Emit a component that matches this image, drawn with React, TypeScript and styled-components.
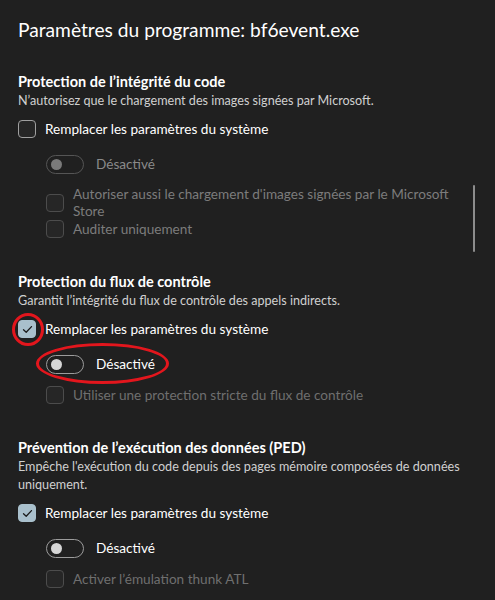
import React from "react";
import styled, { createGlobalStyle } from "styled-components";

const Global = createGlobalStyle`
  html, body { margin: 0; padding: 0; background: #202020; }
  body { font-family: Lato, "Noto Sans", sans-serif; color: #fff; }
`;

const Page = styled.div`
  position: relative;
  width: 495px;
  height: 600px;
  overflow: hidden;
  background: #202020;
  padding: 16px 0 0 18px;
  box-sizing: border-box;
`;

const Heading = styled.h1`
  margin: 0 0 28px 0;
  font-size: 19.2px;
  line-height: 28px;
  font-weight: 400;
  color: #fff;
`;

const Section = styled.section`
  display: flex;
  flex-direction: column;
  margin-bottom: 34px;
`;

const Title = styled.h2`
  margin: 0;
  font-size: 14.5px;
  line-height: 20px;
  font-weight: 700;
  color: #fff;
`;

const Desc = styled.p`
  margin: 0 0 9px 0;
  font-size: 12.6px;
  line-height: 18px;
  color: #d0d0d0;
  max-width: 462px;
`;

const Row = styled.div`
  position: relative;
  display: flex;
  align-items: center;
  gap: 9px;
  min-height: 20px;
`;

const Box = styled.span<{ $checked?: boolean; $disabled?: boolean }>`
  flex: none;
  width: 18px;
  height: 18px;
  border-radius: 4px;
  box-sizing: border-box;
  display: flex;
  align-items: center;
  justify-content: center;
  background: ${(p) => (p.$checked ? "#a9c0cc" : "#262626")};
  border: 1px solid
    ${(p) => (p.$checked ? "#a9c0cc" : p.$disabled ? "#4c4c4c" : "#a0a0a0")};
`;

const Label = styled.span`
  font-size: 13.6px;
  line-height: 20px;
  color: #fff;
`;

const ToggleRow = styled.div`
  position: relative;
  display: flex;
  align-items: center;
  gap: 12px;
  margin: 15px 0 12px 28px;
  height: 20px;
`;

const Track = styled.span<{ $disabled?: boolean }>`
  flex: none;
  width: 38px;
  height: 19px;
  border-radius: 10px;
  box-sizing: border-box;
  border: 1px solid ${(p) => (p.$disabled ? "#555" : "#9c9c9c")};
  display: flex;
  align-items: center;
  padding-left: 4px;
`;

const Knob = styled.span<{ $disabled?: boolean }>`
  width: 11px;
  height: 11px;
  border-radius: 50%;
  background: ${(p) => (p.$disabled ? "#7a7a7a" : "#d6d6d6")};
`;

const ToggleLabel = styled.span<{ $disabled?: boolean }>`
  font-size: 13.6px;
  line-height: 20px;
  color: ${(p) => (p.$disabled ? "#8a8a8a" : "#fff")};
`;

const SubList = styled.div`
  display: flex;
  flex-direction: column;
  margin-left: 28px;
`;

const SubItem = styled.div`
  display: flex;
  align-items: center;
  gap: 9px;
`;

const SubLabel = styled.span<{ $disabled?: boolean }>`
  font-size: 13.6px;
  line-height: 17px;
  color: ${(p) => (p.$disabled ? "#6f6f6f" : "#7c7c7c")};
  max-width: 395px;
`;

const Scrollbar = styled.div`
  position: absolute;
  left: 473px;
  top: 185px;
  width: 2px;
  height: 67px;
  border-radius: 1px;
  background: #8c8c8c;
`;

const RedRing = styled.span<{ $l: number; $t: number; $w: number; $h: number }>`
  position: absolute;
  left: ${(p) => p.$l}px;
  top: ${(p) => p.$t}px;
  width: ${(p) => p.$w}px;
  height: ${(p) => p.$h}px;
  border: 3px solid #e3161d;
  border-radius: 50%;
  box-sizing: border-box;
  pointer-events: none;
`;

const Check = () => (
  <svg width="11" height="9" viewBox="0 0 11 9" fill="none">
    <path d="M1.5 4.8 L4.2 7.3 L9.5 1.6" stroke="#1b1b1b" strokeWidth="1.3" strokeLinecap="round" strokeLinejoin="round" />
  </svg>
);

const Toggle: React.FC<{ disabled?: boolean; ring?: boolean }> = ({ disabled, ring }) => (
  <ToggleRow>
    {ring && <RedRing $l={-10} $t={-11} $w={133} $h={41} />}
    <Track $disabled={disabled}>
      <Knob $disabled={disabled} />
    </Track>
    <ToggleLabel $disabled={disabled}>Désactivé</ToggleLabel>
  </ToggleRow>
);

export default function App() {
  return (
    <Page>
      <Global />
      <Heading>Paramètres du programme: bf6event.exe</Heading>

      <Section>
        <Title>Protection de l’intégrité du code</Title>
        <Desc>N’autorisez que le chargement des images signées par Microsoft.</Desc>
        <Row>
          <Box />
          <Label>Remplacer les paramètres du système</Label>
        </Row>
        <Toggle disabled />
        <SubList>
          <SubItem>
            <Box $disabled />
            <SubLabel>Autoriser aussi le chargement d'images signées par le Microsoft Store</SubLabel>
          </SubItem>
          <SubItem>
            <Box $disabled />
            <SubLabel>Auditer uniquement</SubLabel>
          </SubItem>
        </SubList>
      </Section>

      <Section>
        <Title>Protection du flux de contrôle</Title>
        <Desc>Garantit l’intégrité du flux de contrôle des appels indirects.</Desc>
        <Row>
          <RedRing $l={-6} $t={-6} $w={32} $h={33} />
          <Box $checked>
            <Check />
          </Box>
          <Label>Remplacer les paramètres du système</Label>
        </Row>
        <Toggle ring />
        <SubList>
          <SubItem>
            <Box $disabled />
            <SubLabel $disabled>Utiliser une protection stricte du flux de contrôle</SubLabel>
          </SubItem>
        </SubList>
      </Section>

      <Section>
        <Title>Prévention de l’exécution des données (PED)</Title>
        <Desc>Empêche l'exécution du code depuis des pages mémoire composées de données uniquement.</Desc>
        <Row>
          <Box $checked>
            <Check />
          </Box>
          <Label>Remplacer les paramètres du système</Label>
        </Row>
        <Toggle />
        <SubList>
          <SubItem>
            <Box $disabled />
            <SubLabel $disabled>Activer l’émulation thunk ATL</SubLabel>
          </SubItem>
        </SubList>
      </Section>

      <Scrollbar />
    </Page>
  );
}
